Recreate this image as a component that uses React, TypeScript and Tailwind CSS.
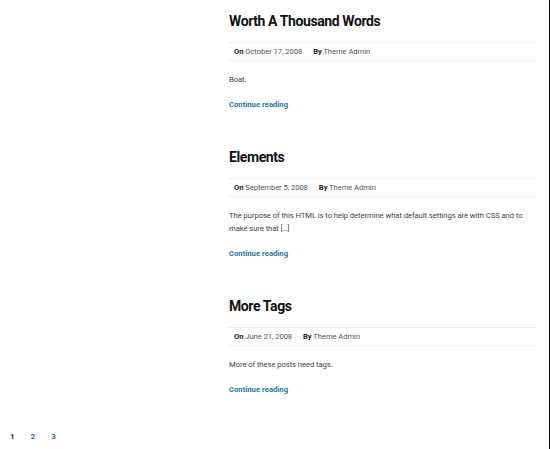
import React from 'react';

interface Post {
  title: string;
  date: string;
  author: string;
  excerpt: string;
}

const posts: Post[] = [
  { title: 'Worth A Thousand Words', date: 'October 17, 2008', author: 'Theme Admin', excerpt: 'Boat.' },
  {
    title: 'Elements',
    date: 'September 5, 2008',
    author: 'Theme Admin',
    excerpt: 'The purpose of this HTML is to help determine what default settings are with CSS and to make sure that [\u2026]',
  },
  { title: 'More Tags', date: 'June 21, 2008', author: 'Theme Admin', excerpt: 'More of these posts need tags.' },
];

const body = { fontFamily: 'Roboto, "Liberation Sans", sans-serif' };

const PostCard: React.FC<{ post: Post }> = ({ post }) => (
  <article className="flex flex-col">
    <h2 className="text-[14px] leading-[20px] font-bold text-[#111] tracking-[-0.4px]">{post.title}</h2>
    <div className="mt-[11px] h-[19px] border-y border-[#eeeeee] flex items-center pl-[5px] gap-[11px] text-[7.6px] tracking-[-0.05px] text-[#555]">
      <span>
        <b className="font-bold text-[#222]">On</b> {post.date}
      </span>
      <span>
        <b className="font-bold text-[#222]">By</b> {post.author}
      </span>
    </div>
    {/* excerpt wraps a little short of the column edge */}
    <p className="mt-[12px] pr-[12px] text-[7.7px] leading-[13px] tracking-[-0.08px] text-[#444]">{post.excerpt}</p>
    <a className="mt-[12px] text-[7.7px] leading-[13px] font-bold text-[#1e78a5]">Continue reading</a>
  </article>
);

export default function App() {
  return (
    <div className="w-[550px] h-[449px] bg-white border-r border-black flex flex-col overflow-hidden" style={body}>
      <div className="flex">
        <div className="w-[229px] shrink-0" />
        <div className="w-[307px] flex flex-col gap-[36px] pt-[11px]">
          {posts.map((p) => (
            <PostCard key={p.title} post={p} />
          ))}
        </div>
      </div>
      <nav className="mt-auto mb-[6px] pl-[10px] flex gap-[16px] text-[8px] font-bold">
        <span className="text-[#222]">1</span>
        <span className="text-[#1e78a5]">2</span>
        <span className="text-[#1e78a5]">3</span>
      </nav>
    </div>
  );
}
